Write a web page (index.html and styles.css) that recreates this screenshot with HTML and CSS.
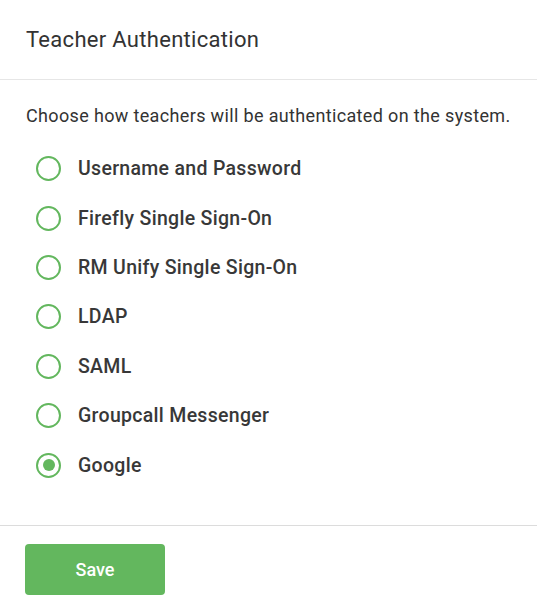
FILE: index.html
```html
<!DOCTYPE html>
<html>
<head>
<meta charset="utf-8">
<link rel="stylesheet" href="styles.css">
</head>
<body>
<div class="panel">
  <div class="panel-header">
    <h1 class="title">Teacher Authentication</h1>
  </div>
  <div class="panel-body">
    <p class="desc">Choose how teachers will be authenticated on the system.</p>
    <div class="options">
      <label class="option"><span class="radio"></span><span class="label">Username and Password</span></label>
      <label class="option"><span class="radio"></span><span class="label">Firefly Single Sign-On</span></label>
      <label class="option"><span class="radio"></span><span class="label">RM Unify Single Sign-On</span></label>
      <label class="option"><span class="radio"></span><span class="label">LDAP</span></label>
      <label class="option"><span class="radio"></span><span class="label">SAML</span></label>
      <label class="option"><span class="radio"></span><span class="label">Groupcall Messenger</span></label>
      <label class="option"><span class="radio checked"></span><span class="label">Google</span></label>
    </div>
  </div>
  <div class="panel-footer">
    <button class="btn">Save</button>
  </div>
</div>
</body>
</html>
```
FILE: styles.css
```css
* { box-sizing: border-box; }
html, body { margin: 0; padding: 0; background: #fff; }
body { font-family: Roboto, "Noto Sans", sans-serif; color: #333; }
.panel { width: 537px; }
.panel-header {
  height: 80px;
  border-bottom: 1px solid #e6e6e6;
  padding: 0 26px;
  display: flex;
  align-items: center;
}
.title { margin: 0; font-size: 22px; font-weight: 400; color: #333; letter-spacing: 0.3px; }
.panel-body { padding: 24px 26px 35px; border-bottom: 1px solid #dcdcdc; }
.desc { margin: 0; font-size: 18px; line-height: 24px; color: #333; letter-spacing: 0.35px; }
.options { display: flex; flex-direction: column; margin-top: 16px; }
.option { display: flex; align-items: center; height: 49.4px; padding-left: 10px; }
.radio {
  width: 25px; height: 25px; border-radius: 50%;
  border: 2.5px solid #63b75e;
  display: flex; align-items: center; justify-content: center;
  flex: none;
}
.radio.checked::after {
  content: ""; width: 12px; height: 12px; border-radius: 50%; background: #63b75e;
}
.label { margin-left: 17px; font-size: 19.5px; font-weight: 500; color: #383838; letter-spacing: 0.3px; }
.panel-footer { padding: 18px 25px; }
.btn {
  width: 140px; height: 51px; border: none; border-radius: 4px;
  background: #63b75e; color: #fff;
  font-family: Roboto, sans-serif; font-size: 18px; font-weight: 500;
}
```
